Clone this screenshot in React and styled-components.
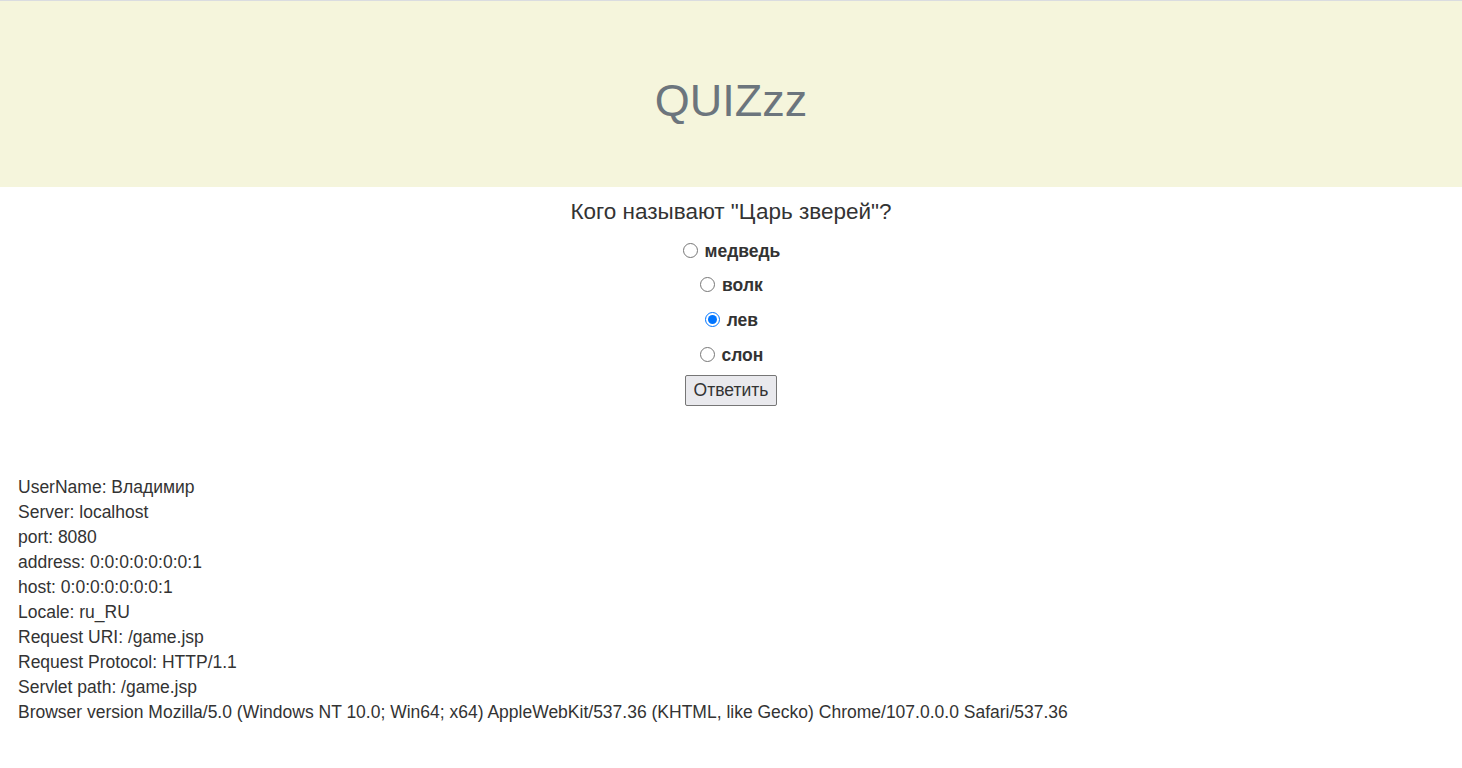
import React, { useState } from "react";
import styled, { createGlobalStyle } from "styled-components";

const GlobalStyle = createGlobalStyle`
  html, body {
    margin: 0;
    padding: 0;
    background: #fff;
  }
  body {
    font-family: "Liberation Sans", Arial, sans-serif;
    font-size: 17.5px;
    color: #333;
  }
`;

const answers = ["медведь", "волк", "лев", "слон"];

const info = [
  "UserName: Владимир",
  "Server: localhost",
  "port: 8080",
  "address: 0:0:0:0:0:0:0:1",
  "host: 0:0:0:0:0:0:0:1",
  "Locale: ru_RU",
  "Request URI: /game.jsp",
  "Request Protocol: HTTP/1.1",
  "Servlet path: /game.jsp",
  "Browser version Mozilla/5.0 (Windows NT 10.0; Win64; x64) AppleWebKit/537.36 (KHTML, like Gecko) Chrome/107.0.0.0 Safari/537.36",
];

const App = () => {
  const [picked, setPicked] = useState("лев");

  return (
    <>
      <GlobalStyle />
      <Header>
        <Title>QUIZzz</Title>
      </Header>

      <Form onSubmit={(e) => e.preventDefault()}>
        <Question>Кого называют "Царь зверей"?</Question>
        <Options>
          {answers.map((a) => (
            <Option key={a}>
              <input
                type="radio"
                name="answer"
                value={a}
                checked={picked === a}
                onChange={() => setPicked(a)}
              />{" "}
              {a}
            </Option>
          ))}
        </Options>
        <Submit type="submit">Ответить</Submit>
      </Form>

      <Info>
        {info.map((line, i) => (
          <InfoLine key={i}>{line}</InfoLine>
        ))}
      </Info>
    </>
  );
};

const Header = styled.header`
  height: 186px;
  border-top: 1px solid #dadce0;
  background-color: #f5f5dc;
  display: flex;
  align-items: center;
  justify-content: center;
`;

const Title = styled.h1`
  margin: 0;
  padding-top: 14px;
  font-size: 45px;
  font-weight: 400;
  line-height: 1.1;
  color: #6c757d;
`;

const Form = styled.form`
  display: flex;
  flex-direction: column;
  align-items: center;
  padding-top: 10.5px;
`;

const Question = styled.div`
  font-size: 22.5px;
  line-height: 27px;
  margin-bottom: 14px;
`;

const Options = styled.div`
  display: flex;
  flex-direction: column;
  align-items: center;
  gap: 9.8px;
`;

const Option = styled.label`
  font-weight: 700;
  line-height: 25px;
  margin-right: 2px;

  input {
    width: 15px;
    height: 15px;
    margin: 0 2px 0 3px;
    vertical-align: -1px;
  }
`;

const Submit = styled.button`
  margin-top: 7px;
  height: 31px;
  padding: 0 7.5px;
  font-family: "Liberation Sans", Arial, sans-serif;
  font-size: 17.5px;
  color: #333;
  background: #e9e9ed;
  border: 1px solid #767676;
  border-radius: 2px;
`;

const Info = styled.div`
  margin-top: 69.5px;
  padding: 0 18px;
`;

const InfoLine = styled.div`
  line-height: 25px;
`;

export default App;
